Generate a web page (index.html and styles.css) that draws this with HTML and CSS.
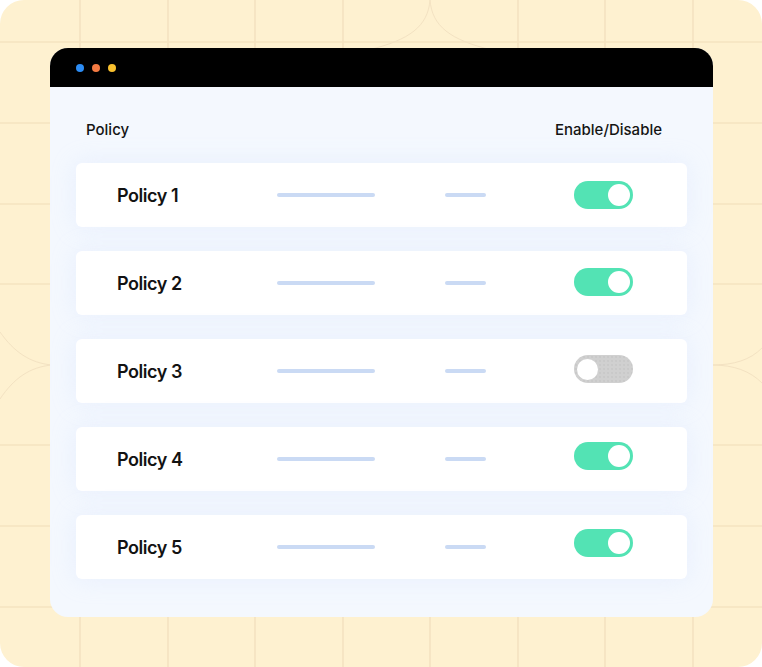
FILE: index.html
```html
<!DOCTYPE html>
<html>
<head>
<meta charset="utf-8">
<link rel="stylesheet" href="styles.css">
</head>
<body>
<div class="frame">
  <svg class="grid" width="762" height="667" viewBox="0 0 762 667" aria-hidden="true">
    <g class="gl">
      <line x1="80" y1="0" x2="80" y2="667"/>
      <line x1="168" y1="0" x2="168" y2="667"/>
      <line x1="255" y1="0" x2="255" y2="667"/>
      <line x1="343" y1="0" x2="343" y2="667"/>
      <line x1="430" y1="600" x2="430" y2="667"/>
      <line x1="518" y1="0" x2="518" y2="667"/>
      <line x1="605" y1="0" x2="605" y2="667"/>
      <line x1="693" y1="0" x2="693" y2="667"/>
      <line x1="0" y1="42" x2="762" y2="42"/>
      <line x1="0" y1="123" x2="762" y2="123"/>
      <line x1="0" y1="204" x2="762" y2="204"/>
      <line x1="0" y1="284" x2="762" y2="284"/>
      <line x1="0" y1="445" x2="762" y2="445"/>
      <line x1="0" y1="526" x2="762" y2="526"/>
      <line x1="0" y1="607" x2="762" y2="607"/>
    </g>
    <g class="arc">
      <path d="M430,0 C428,26 410,40 368,50"/>
      <path d="M430,0 C432,26 450,40 492,50"/>
      <path d="M0,332 C14,352 30,363 52,365"/>
      <path d="M0,399 C14,378 30,367 52,365"/>
      <path d="M712,365 C734,365 750,360 762,348"/>
      <path d="M712,365 C734,365 750,371 762,383"/>
    </g>
  </svg>
  <div class="window">
    <div class="titlebar">
      <span class="dot blue"></span>
      <span class="dot orange"></span>
      <span class="dot yellow"></span>
    </div>
    <div class="content">
      <div class="head">
        <span>Policy</span>
        <span>Enable/Disable</span>
      </div>
      <div class="rows">
        <div class="row">
          <span class="name">Policy 1</span>
          <span class="bar long"></span>
          <span class="bar short"></span>
          <span class="toggle on"><span class="knob"></span></span>
        </div>
        <div class="row">
          <span class="name">Policy 2</span>
          <span class="bar long"></span>
          <span class="bar short"></span>
          <span class="toggle on"><span class="knob"></span></span>
        </div>
        <div class="row">
          <span class="name">Policy 3</span>
          <span class="bar long"></span>
          <span class="bar short"></span>
          <span class="toggle off"><span class="knob"></span></span>
        </div>
        <div class="row">
          <span class="name">Policy 4</span>
          <span class="bar long"></span>
          <span class="bar short"></span>
          <span class="toggle on"><span class="knob"></span></span>
        </div>
        <div class="row">
          <span class="name">Policy 5</span>
          <span class="bar long"></span>
          <span class="bar short"></span>
          <span class="toggle on"><span class="knob"></span></span>
        </div>
      </div>
    </div>
  </div>
</div>
</body>
</html>
```

FILE: styles.css
```css
html, body {
  margin: 0;
  padding: 0;
  background: #ffffff;
}

body {
  font-family: Inter, "Open Sans", "Liberation Sans", sans-serif;
  color: #141414;
}

.frame {
  position: relative;
  width: 762px;
  height: 667px;
  box-sizing: border-box;
  padding: 48px 49px 50px 50px;
  background: #fef1d0;
  border-radius: 24px;
  overflow: hidden;
}

.grid {
  position: absolute;
  left: 0;
  top: 0;
}

.gl line {
  stroke: #f4e3c0;
  stroke-width: 1.6;
}

.arc path {
  fill: none;
  stroke: #f3e2c2;
  stroke-width: 1;
}

.window {
  position: relative;
  height: 569px;
  border-radius: 18px;
  background: #f4f8fe;
  overflow: hidden;
  display: flex;
  flex-direction: column;
}

.titlebar {
  height: 39px;
  flex: none;
  background: #000000;
  display: flex;
  align-items: center;
  gap: 8px;
  padding-left: 26px;
}

.dot {
  width: 8px;
  height: 8px;
  border-radius: 50%;
}

.dot.blue { background: #2c8cf4; }
.dot.orange { background: #f47a42; }
.dot.yellow { background: #f8c02e; }

.content {
  padding: 0 26px;
}

.head {
  display: flex;
  justify-content: space-between;
  padding: 33px 25px 0 10px;
  height: 43px;
  font-size: 15px;
  font-weight: 500;
  line-height: 20px;
  color: #141414;
}

.rows {
  display: flex;
  flex-direction: column;
  gap: 24px;
}

.row {
  height: 64px;
  background: #ffffff;
  border-radius: 6px;
  box-shadow: 0 0 24px rgba(200, 218, 250, 0.28);
  display: grid;
  grid-template-columns: 160px 168px 129px 59px;
  align-items: center;
  padding-left: 41px;
}

.name {
  font-size: 18px;
  font-weight: 600;
  letter-spacing: -0.45px;
  color: #121212;
  padding-top: 1px;
}

.bar {
  display: block;
  height: 4px;
  border-radius: 2px;
  background: #cadaf4;
}

.bar.long { width: 98px; }
.bar.short { width: 41px; }

.toggle {
  position: relative;
  display: block;
  width: 59px;
  height: 28px;
  border-radius: 14px;
  box-sizing: border-box;
}

.row:nth-child(2) .toggle { margin-top: -2px; }
.row:nth-child(3) .toggle { margin-top: -4px; }
.row:nth-child(4) .toggle { margin-top: -6px; }
.row:nth-child(5) .toggle { margin-top: -8px; }

.toggle.on {
  background: #53e3b4;
}

.toggle.off {
  background-color: #d0d0d0;
  background-image: radial-gradient(circle, rgba(175, 175, 175, 0.35) 0.6px, transparent 0.9px);
  background-size: 4px 4px;
}

.knob {
  position: absolute;
  top: 3px;
  width: 22px;
  height: 22px;
  border-radius: 50%;
  background: #ffffff;
}

.toggle.on .knob { right: 3px; }
.toggle.off .knob { left: 3px; top: 3.5px; width: 21px; height: 21px; }
```
